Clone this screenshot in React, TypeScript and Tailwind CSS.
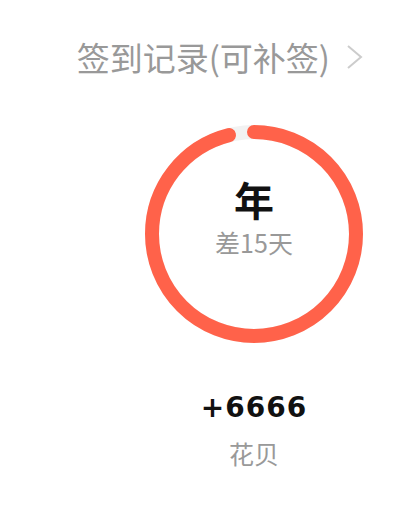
import React from "react";

const CJK = { fontFamily: '"Noto Sans CJK SC", "Noto Sans", sans-serif' };

function ProgressRing({ value }: { value: number }) {
  const r = 102;
  const c = 2 * Math.PI * r;
  return (
    <svg width="218" height="218" viewBox="0 0 218 218" className="block">
      <circle cx="109" cy="109" r={r} fill="none" stroke="#f2f2f2" strokeWidth="14" />
      <circle
        cx="109"
        cy="109"
        r={r}
        fill="none"
        stroke="#ff624a"
        strokeWidth="14"
        strokeLinecap="round"
        strokeDasharray={`${c * value} ${c}`}
        transform="rotate(-90 109 109)"
      />
    </svg>
  );
}

export default function App() {
  const days = 365;
  const left = 15;

  return (
    <div className="w-[401px] h-[509px] bg-white flex flex-col items-end pr-[38px]" style={CJK}>
      {/* Header link */}
      <div className="mt-[35px] flex items-center gap-[16px] text-[33px] leading-[44px] text-[#999999]">
        <span>签到记录(可补签)</span>
        <svg width="18" height="26" viewBox="0 0 18 26" className="mr-[-1px]">
          <polyline points="2,2 15,13 2,24" fill="none" stroke="#cccccc" strokeWidth="2" />
        </svg>
      </div>

      {/* Ring + reward column */}
      <div className="mt-[46px] w-[218px] flex flex-col items-center">
        <div className="relative w-[218px] h-[218px]">
          <ProgressRing value={(days - left) / days} />
          <div className="absolute inset-0 flex flex-col items-center pt-[51px]">
            <div className="text-[40px] leading-[46px] font-bold text-[#111111]">年</div>
            <div className="text-[25px] leading-[30px] text-[#999999] mt-[5px]">差{left}天</div>
          </div>
        </div>

        <div
          className="mt-[49px] text-[28px] leading-[32px] font-bold text-[#111111] tracking-[1px]"
          style={{ fontFamily: '"DejaVu Sans", sans-serif' }}
        >
          +6666
        </div>
        <div className="mt-[14px] text-[25px] leading-[30px] text-[#999999]">花贝</div>
      </div>
    </div>
  );
}
